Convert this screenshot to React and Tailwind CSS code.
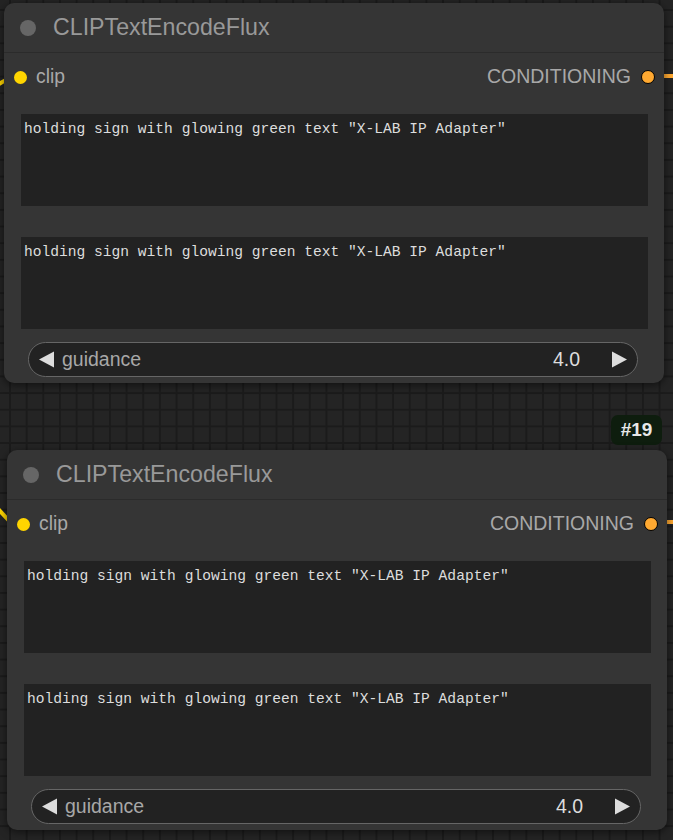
import React from "react";

const PROMPT = 'holding sign with glowing green text "X-LAB IP Adapter"';

/* ─── Slot dot ─── */
const Dot = ({ color, ring }) => (
  <span
    className={`block rounded-full ${color} ${ring ? "border-[1.5px] border-black w-[14px] h-[14px]" : "w-[13px] h-[13px]"}`}
  />
);

/* ─── Multiline prompt box ─── */
const PromptBox = ({ text }) => (
  <div
    className="h-[92px] bg-[#222222] px-[3px] pt-[6px] text-[14.6px] leading-[18px] text-[#dddddd] whitespace-pre"
    style={{ fontFamily: '"Liberation Mono", "DejaVu Sans Mono", monospace' }}
  >
    {text}
  </div>
);

/* ─── Number widget ─── */
const NumberWidget = ({ label, value }) => (
  <div className="ml-[24px] mr-[26px] h-[35px] rounded-full border border-[#666666] bg-[#222222] flex items-center pl-[9px] pr-[9px]">
    <svg width="17" height="17" viewBox="0 0 17 17" className="shrink-0">
      <polygon points="1,8.5 16,0.5 16,16.5" fill="#dddddd" />
    </svg>
    <span className="ml-[7px] text-[19.5px] text-[#a8a8a8]">{label}</span>
    <span className="ml-auto text-[19.5px] text-[#dddddd]">{value}</span>
    <svg width="17" height="17" viewBox="0 0 17 17" className="shrink-0 ml-[31px]">
      <polygon points="16,8.5 1,0.5 1,16.5" fill="#dddddd" />
    </svg>
  </div>
);

/* ─── One CLIPTextEncodeFlux node ─── */
const FluxNode = ({ className }) => (
  <div
    className={`absolute w-[660px] h-[380px] rounded-[10px] bg-[#353535] shadow-[0_2px_8px_rgba(0,0,0,0.55)] flex flex-col ${className}`}
  >
    {/* title */}
    <div className="h-[50px] shrink-0 border-b border-[#2b2b2b] flex items-center">
      <span className="ml-[16px] w-[16px] h-[16px] rounded-full bg-[#666666]" />
      <span className="ml-[17px] text-[23.2px] text-[#999999]">CLIPTextEncodeFlux</span>
    </div>

    {/* slots */}
    <div className="h-[44px] shrink-0 pt-[4px] flex items-center pl-[10px] pr-[9px]">
      <Dot color="bg-[#ffd500]" />
      <span className="ml-[9px] text-[19.3px] text-[#a8a8a8]">clip</span>
      <span className="ml-auto text-[19.5px] text-[#a8a8a8]">CONDITIONING</span>
      <span className="ml-[10px]">
        <Dot color="bg-[#ffa931]" ring />
      </span>
    </div>

    {/* prompts */}
    <div className="mt-[17px] ml-[17px] mr-[16px] flex flex-col gap-[31px]">
      <PromptBox text={PROMPT} />
      <PromptBox text={PROMPT} />
    </div>

    <div className="mt-[13px]">
      <NumberWidget label="guidance" value="4.0" />
    </div>
  </div>
);

export default function App() {
  return (
    <div
      className="relative w-[673px] h-[840px] overflow-hidden bg-[#242424] bg-[linear-gradient(to_right,#1b1b1b_2px,transparent_2px),linear-gradient(to_bottom,#1b1b1b_2px,transparent_2px)] bg-[size:16.67px_16.67px] bg-[position:9px_9px]"
      style={{ fontFamily: '"Liberation Sans", Arial, sans-serif' }}
    >
      {/* wires */}
      <svg className="absolute inset-0" width="673" height="840">
        <path d="M -20 96 C -6 88, -2 84, 6 80" stroke="#ffd500" strokeWidth="4" fill="none" />
        <path d="M -12 498 L 12 524" stroke="#ffd500" strokeWidth="4" fill="none" />
        <path d="M 660 76 L 680 76" stroke="#ffa931" strokeWidth="4" fill="none" />
        <path d="M 664 522 L 680 522" stroke="#ffa931" strokeWidth="4" fill="none" />
      </svg>

      <FluxNode className="left-[4px] top-[3px]" />

      {/* node id badge */}
      <div className="absolute left-[611px] top-[415px] w-[51px] h-[30px] rounded-[7px] bg-[#0e1d0e] flex items-center justify-center text-[19px] font-bold text-[#e8e8e8]">
        #19
      </div>

      <FluxNode className="left-[7px] top-[450px]" />
    </div>
  );
}
